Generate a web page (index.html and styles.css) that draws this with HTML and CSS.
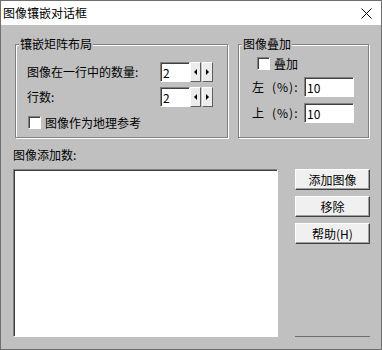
FILE: index.html
```html
<!DOCTYPE html>
<html lang="zh">
<head>
<meta charset="utf-8">
<title>图像镶嵌对话框</title>
<link rel="stylesheet" href="styles.css">
</head>
<body>
<div class="window">
  <div class="titlebar">
    <span class="title">图像镶嵌对话框</span>
    <svg class="close" width="11" height="11" viewBox="0 0 11 11">
      <path d="M0.5 0.5 L10.5 10.5 M10.5 0.5 L0.5 10.5" stroke="#000" stroke-width="1" fill="none"/>
    </svg>
  </div>

  <div class="content">
    <div class="groups">
      <fieldset class="group group-matrix">
        <legend>镶嵌矩阵布局</legend>
        <div class="matrix-body">
          <div class="field-row">
            <span class="field-label">图像在一行中的数量:</span>
            <div class="edit spin-edit">2</div>
            <span class="spin-btn"><i class="arrow arrow-left"></i></span>
            <span class="spin-btn"><i class="arrow arrow-right"></i></span>
          </div>
          <div class="field-row row-gap">
            <span class="field-label">行数:</span>
            <div class="edit spin-edit">2</div>
            <span class="spin-btn"><i class="arrow arrow-left"></i></span>
            <span class="spin-btn"><i class="arrow arrow-right"></i></span>
          </div>
          <div class="check-row geo-check">
            <span class="checkbox"></span>
            <span class="check-label">图像作为地理参考</span>
          </div>
        </div>
      </fieldset>

      <fieldset class="group group-overlay">
        <legend>图像叠加</legend>
        <div class="overlay-body">
          <div class="check-row overlay-check">
            <span class="checkbox"></span>
            <span class="check-label">叠加</span>
          </div>
          <div class="field-row offset-row first-offset">
            <span class="offset-label">左<span class="unit">(%):</span></span>
            <div class="edit offset-edit">10</div>
          </div>
          <div class="field-row offset-row">
            <span class="offset-label">上<span class="unit">(%):</span></span>
            <div class="edit offset-edit">10</div>
          </div>
        </div>
      </fieldset>
    </div>

    <div class="list-label">图像添加数:</div>
    <div class="list-area">
      <div class="listbox"></div>
      <div class="actions">
        <div class="button">添加图像</div>
        <div class="button">移除</div>
        <div class="button">帮助(H)</div>
        <div class="actions-rule"></div>
      </div>
    </div>
  </div>
</div>
</body>
</html>
```

FILE: styles.css
```css
body {
	margin: 0;
	font-family: "Noto Sans CJK SC", "DejaVu Sans", sans-serif;
	font-size: 12px;
	color: #000;
}

.window {
	width: 382px;
	height: 350px;
	box-sizing: border-box;
	border: 1px solid #6e6e6e;
	background: #c0c0c0;
	display: flex;
	flex-direction: column;
}

.titlebar {
	height: 24px;
	flex: none;
	background: #fff;
	display: flex;
	align-items: center;
	justify-content: space-between;
	padding: 0 9px 0 2px;
}
.title {
	line-height: 14px;
}
.close {
	display: block;
}

.content {
	padding: 12px 0 0 12px;
}

.groups {
	display: flex;
	gap: 10px;
	margin-left: 2px;
}

.group {
	margin: 0;
	padding: 0;
	min-width: 0;
	height: 101px;
	box-sizing: border-box;
	border: 1px solid #808080;
	box-shadow: inset 1px 1px #fff, 1px 1px #fff;
}
.group legend {
	margin-left: 3px;
	padding: 0 1px;
	line-height: 14px;
	background: #c0c0c0;
}
.group-matrix {
	width: 213px;
}
.group-overlay {
	width: 131px;
}

.matrix-body {
	padding: 11px 0 0 11px;
}
.overlay-body {
	padding: 6px 0 0 0;
}

.field-row {
	display: flex;
	align-items: center;
	height: 20px;
}
.row-gap {
	margin-top: 5px;
}
.field-label {
	width: 133px;
	line-height: 14px;
}

.edit {
	height: 20px;
	box-sizing: border-box;
	background: #fff;
	border: 1px solid;
	border-color: #808080 #fff #fff #808080;
	box-shadow: inset 1px 1px #404040;
	padding: 2px 0 0 2px;
	line-height: 15px;
}
.spin-edit {
	width: 30px;
}

.spin-btn {
	width: 11px;
	height: 20px;
	box-sizing: border-box;
	margin-left: 1px;
	background: #ececec;
	border: 1px solid;
	border-color: #fff #606060 #606060 #fff;
	display: flex;
	align-items: center;
	justify-content: center;
}
.spin-edit + .spin-btn {
	margin-left: 0;
}
.arrow {
	width: 0;
	height: 0;
	border-top: 3px solid transparent;
	border-bottom: 3px solid transparent;
}
.arrow-left {
	border-right: 3px solid #000;
}
.arrow-right {
	border-left: 3px solid #000;
}

.check-row {
	display: flex;
	align-items: center;
	height: 13px;
}
.geo-check {
	margin: 9px 0 0 1px;
}
.overlay-check {
	margin-left: 18px;
}
.checkbox {
	width: 13px;
	height: 13px;
	box-sizing: border-box;
	background: #fff;
	border: 1px solid;
	border-color: #808080 #fff #fff #808080;
	box-shadow: inset 1px 1px #404040;
}
.check-label {
	margin-left: 4px;
	line-height: 14px;
}

.offset-row {
	margin-top: 6px;
	padding-left: 13px;
}
.first-offset {
	margin-top: 7px;
}
.offset-label {
	width: 52px;
	line-height: 14px;
}
.unit {
	margin-left: 8px;
	letter-spacing: 1px;
}
.offset-edit {
	width: 50px;
}

.list-label {
	margin-top: 10px;
	line-height: 14px;
}

.list-area {
	display: flex;
	margin-top: 7px;
}
.listbox {
	width: 265px;
	height: 168px;
	box-sizing: border-box;
	background: #fff;
	border: 1px solid;
	border-color: #808080 #fff #fff #808080;
	box-shadow: inset 1px 1px #404040;
}

.actions {
	width: 75px;
	margin-left: 17px;
	display: flex;
	flex-direction: column;
	gap: 6px;
}
.button {
	height: 21px;
	box-sizing: border-box;
	background: #f0f0f0;
	border: 1px solid;
	border-color: #fff #404040 #404040 #fff;
	box-shadow: inset -1px -1px #a0a0a0;
	display: flex;
	align-items: center;
	justify-content: center;
	line-height: 14px;
}
.actions-rule {
	margin-top: auto;
	border-bottom: 1px solid #6e6e6e;
}
```
